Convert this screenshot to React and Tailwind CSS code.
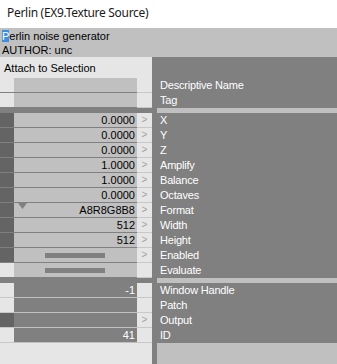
import React from 'react';

const inputs = [
  { label: 'X', value: '0.0000', pin: true, arrow: true },
  { label: 'Y', value: '0.0000', pin: true, arrow: true },
  { label: 'Z', value: '0.0000', pin: true, arrow: true },
  { label: 'Amplify', value: '1.0000', pin: true, arrow: true },
  { label: 'Balance', value: '1.0000', pin: true, arrow: true },
  { label: 'Octaves', value: '0.0000', pin: true, arrow: true },
  { label: 'Format', value: 'A8R8G8B8', pin: true, arrow: true, enumPin: true },
  { label: 'Width', value: '512', pin: true, arrow: true },
  { label: 'Height', value: '512', pin: true, arrow: true },
  { label: 'Enabled', bar: true, pin: true, arrow: true },
  { label: 'Evaluate', bar: true, pin: false, arrow: false },
];

const outputs = [
  { label: 'Window Handle', value: '-1', pin: false, arrow: false },
  { label: 'Patch', value: '', pin: false, arrow: false },
  { label: 'Output', value: '', pin: true, arrow: true },
  { label: 'ID', value: '41', pin: false, arrow: false },
];

function Arrow() {
  return <span className="text-[10px] leading-[14px] text-[#a4a0a8]">&gt;</span>;
}

function InputRow({ row }) {
  return (
    <div className="flex h-[15px]">
      <div className={`w-[14px] border-b border-[#808080] ${row.pin ? 'bg-[#646464]' : 'bg-[#e6e6e6]'}`} />
      <div className="relative flex w-[123px] items-center justify-end border-b border-[#808080] bg-[#c0c0c0] pr-[2px] text-[11px] leading-[14px] text-black">
        {row.enumPin && (
          <svg className="absolute left-[4px] top-0" width="9" height="6" viewBox="0 0 9 6">
            <path d="M0 0 H9 L4.5 6 Z" fill="#808080" />
          </svg>
        )}
        {row.bar ? <div className="mx-auto h-[5px] w-[60px] bg-[#808080]" /> : row.value}
      </div>
      <div className="flex w-[15px] justify-center border-b border-[#c8c8c8] bg-[#e6e6e6]">
        {row.arrow && <Arrow />}
      </div>
    </div>
  );
}

function OutputRow({ row }) {
  return (
    <div className="flex h-[15px]">
      <div className={`w-[14px] border-b border-[#c8c8c8] ${row.pin ? 'bg-[#646464]' : 'bg-[#e6e6e6]'}`} />
      <div className="flex w-[123px] items-center justify-end border-b border-[#c0c0c0] bg-[#808080] pr-[2px] text-[11px] leading-[14px] text-white">
        {row.value}
      </div>
      <div className="flex w-[15px] justify-center border-b border-[#c8c8c8] bg-[#e6e6e6]">
        {row.arrow && <Arrow />}
      </div>
    </div>
  );
}

function Label({ text }) {
  return <div className="h-[15px] pl-[3px] text-[11px] leading-[14px] tracking-[-0.2px] text-white">{text}</div>;
}

export default function App() {
  return (
    <div className="flex h-[364px] w-[337px] flex-col overflow-hidden font-['Liberation_Sans',sans-serif]">
      <div className="h-[28px] bg-white pl-[7px] font-['Noto_Sans',sans-serif] text-[12px] leading-[26px] tracking-[-0.3px] text-[#1a1a1a]">
        Perlin (EX9.Texture Source)
      </div>
      <div className="h-[29px] bg-[#c0c0c0] pl-[2px] pt-[1px] text-[11px] leading-[14px] text-black">
        <div><span className="bg-[#3c8fe0] text-white">P</span>erlin noise generator</div>
        <div>AUTHOR: unc</div>
      </div>
      <div className="flex flex-1">
        {/* pins */}
        <div className="w-[152px] bg-[#e6e6e6]">
          <div className="h-[21px] pl-[4px] pt-[5px] text-[11px] leading-[13px] text-black">Attach to Selection</div>
          <InputRow row={{ value: '', pin: false, arrow: false }} />
          <InputRow row={{ value: '', pin: false, arrow: false }} />
          <div className="h-[5px] bg-[#808080]" />
          {inputs.map((r) => <InputRow key={r.label} row={r} />)}
          <div className="h-[5px] bg-[#808080]" />
          {outputs.map((r) => <OutputRow key={r.label} row={r} />)}
        </div>

        {/* labels */}
        <div className="flex flex-1 flex-col bg-[#808080] pl-[5px]">
          <div className="h-[21px]" />
          <Label text="Descriptive Name" />
          <Label text="Tag" />
          <div className="h-[5px] bg-[#c0c0c0]" />
          {inputs.map((r) => <Label key={r.label} text={r.label} />)}
          <div className="h-[5px] bg-[#c0c0c0]" />
          {outputs.map((r) => <Label key={r.label} text={r.label} />)}
          <div className="flex-1 bg-[#c0c0c0]" />
        </div>
      </div>
    </div>
  );
}
